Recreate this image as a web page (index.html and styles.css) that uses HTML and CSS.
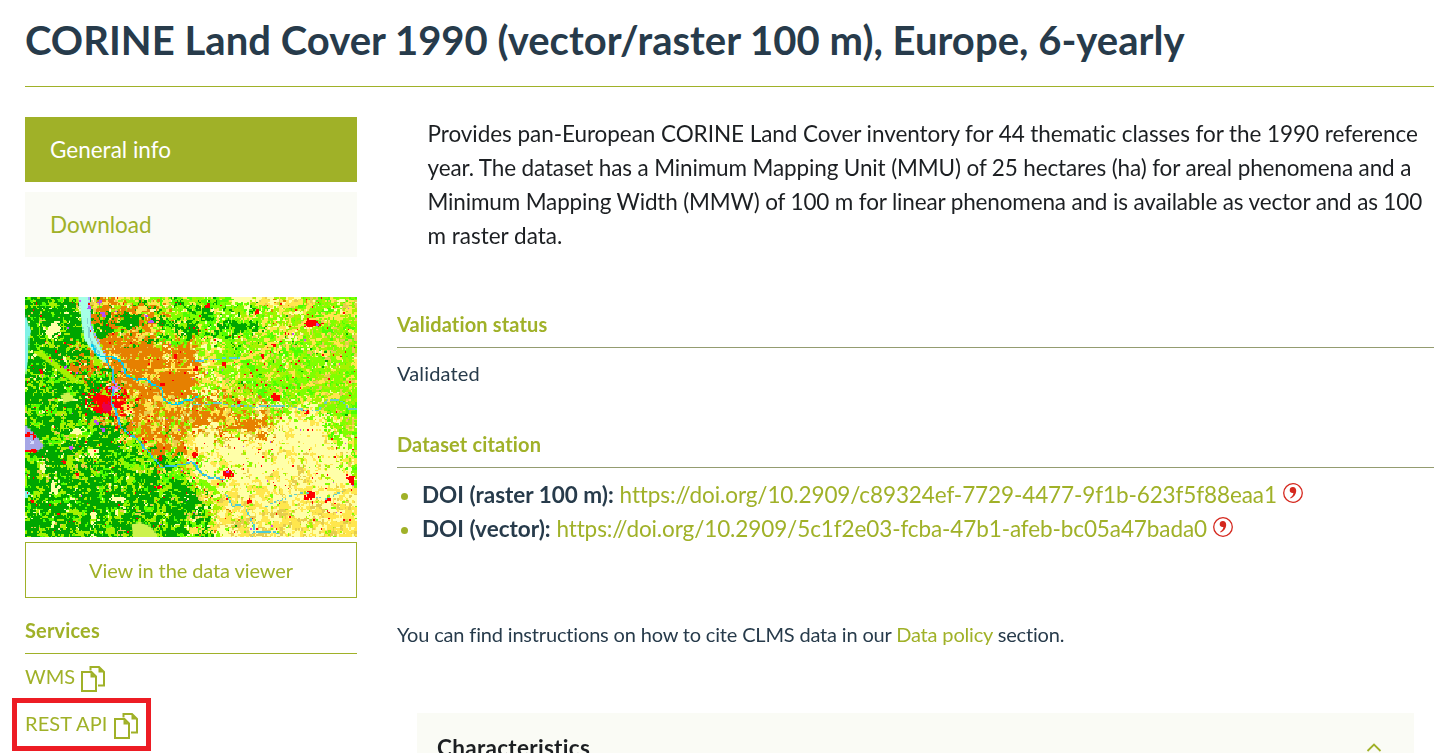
FILE: index.html
```html
<!DOCTYPE html>
<html lang="en">
<head>
<meta charset="utf-8">
<title>CORINE Land Cover 1990</title>
<link rel="stylesheet" href="styles.css">
</head>
<body>
<svg class="defs" aria-hidden="true">
  <symbol id="copy" viewBox="0 0 24 26"><path d="M9.500 4.500V1H18l5 5v13.500h-6M1 6h9.500l4.500 4.500V25H1z" fill="none" stroke="currentColor" stroke-width="2"/><path d="M9.500 6l5.500 5.500H9.500zM17.500 1L23 6.500h-5.500z" fill="currentColor"/></symbol>
  <symbol id="cite" viewBox="0 0 20 20"><circle cx="10" cy="10" r="9.300" fill="none" stroke="currentColor" stroke-width="1.300"/><path d="M9.900 4.100a3.200 3.200 0 0 0-3.200 3.100c0 2 1.700 3.200 3.700 2.700-.3 2-1.400 3.600-3.300 4.900l.5.700c3.300-1.500 5.600-4.200 5.600-7.500 0-2.500-1.300-3.900-3.300-3.900z" fill="currentColor"/></symbol>
</svg>
<header class="page-header"><h1>CORINE Land Cover 1990 (vector/raster 100 m), Europe, 6-yearly</h1></header>
<div class="layout">
  <aside class="sidebar">
    <nav class="tabs">
      <a class="tab active">General info</a>
      <a class="tab">Download</a>
    </nav>
    <canvas class="map" id="map" width="221" height="160"></canvas>
    <a class="viewer">View in the data viewer</a>
    <h2 class="heading services">Services</h2>
    <div class="service"><span class="wms">WMS</span><svg class="copy"><use href="#copy"/></svg></div>
    <div class="service marked"><span class="rest">REST API</span><svg class="copy"><use href="#copy"/></svg></div>
  </aside>
  <main class="content">
    <p class="intro"><span class="l1">Provides pan-European CORINE Land Cover inventory for 44 thematic classes for the 1990 reference</span><br><span class="l2">year. The dataset has a Minimum Mapping Unit (MMU) of 25 hectares (ha) for areal phenomena and a</span><br><span class="l3">Minimum Mapping Width (MMW) of 100 m for linear phenomena and is available as vector and as 100</span><br>m raster data.</p>
    <h2 class="heading">Validation status</h2>
    <p class="validated">Validated</p>
    <h2 class="heading">Dataset citation</h2>
    <ul class="citations">
      <li><b>DOI (raster 100 m):</b> <a>https://doi.org/10.2909/c89324ef-7729-4477-9f1b-623f5f88eaa1</a><svg class="cite"><use href="#cite"/></svg></li>
      <li><b>DOI (vector):</b> <a>https://doi.org/10.2909/5c1f2e03-fcba-47b1-afeb-bc05a47bada0</a><svg class="cite"><use href="#cite"/></svg></li>
    </ul>
    <p class="policy">You can find instructions on how to cite CLMS data in our <a>Data policy</a> section.</p>
    <section class="accordion"><h2>Characteristics</h2><svg class="chevron" viewBox="0 0 16 9"><path d="M1.500 8L8 1.500 14.500 8" fill="none" stroke="currentColor" stroke-width="1.800"/></svg></section>
  </main>
</div>
<script src="map.js"></script>
</body>
</html>
```
FILE: styles.css
```css
* { box-sizing: border-box; }
body { margin: 0; height: 753px; overflow: hidden; background: #fff; color: #273b4b; font-family: Lato, sans-serif; font-size: 20px; font-variant-ligatures: none; }
h1, h2, p, ul { margin: 0; }
a { color: #a0b128; }
.defs { position: absolute; width: 0; height: 0; }
.page-header { height: 87px; margin: 0 11px 0 25px; padding-top: 15px; border-bottom: 1px solid #a0b128; }
h1 { font-size: 40px; line-height: 50px; font-weight: 700; letter-spacing: .03px; white-space: nowrap; }
.layout { display: flex; gap: 40px; height: 666px; padding: 30px 11px 0 25px; overflow: hidden; }
.sidebar { width: 332px; flex: none; }
.tabs { display: grid; gap: 10px; }
.tab { display: flex; align-items: center; height: 65px; padding-left: 25px; background: #fafbf5; font-size: 22.5px; }
.tab.active { background: #a0b128; color: #fff; }
.map { display: block; width: 332px; height: 240px; margin-top: 40px; image-rendering: pixelated; }
.viewer { display: flex; align-items: center; justify-content: center; height: 56px; margin-top: 5px; border: 1px solid #a0b128; letter-spacing: -.1px; }
.heading { height: 37px; border-bottom: 1px solid #949c70; color: #a0b128; font-size: 20px; line-height: 27px; font-weight: 700; letter-spacing: .15px; }
.services { margin-top: 19px; border-color: #a0b128; }
.service { display: flex; align-items: center; gap: 6px; height: 47px; padding-bottom: 3px; color: #a0b128; }
.copy { width: 24px; height: 26px; position: relative; top: 3px; }
.marked { width: 139px; height: 53px; margin: -3px 0 0 -13px; padding-left: 8px; border: 5px solid #ed1c24; letter-spacing: .1px; }
.content { flex: 1; min-width: 0; }
.intro { height: 194px; padding-left: 30.5px; color: #1c1f22; font-size: 22.5px; line-height: 34px; white-space: nowrap; }
.l1 { letter-spacing: -.055px; }
.l2 { letter-spacing: -.13px; }
.l3 { letter-spacing: -.15px; }
.validated { height: 83px; padding-top: 12px; line-height: 27px; letter-spacing: .15px; }
.citations { height: 133px; padding: 10px 0 0 25px; font-size: 22.5px; line-height: 34px; white-space: nowrap; }
.citations li::marker { color: #a0b128; }
.citations a { letter-spacing: -.1px; }
.cite { width: 20px; height: 20px; margin-left: 6px; color: #d5281e; }
.policy { height: 112px; padding-top: 18px; line-height: 30px; letter-spacing: -.17px; }
.accordion { display: flex; justify-content: space-between; height: 90px; margin: 0 20px; padding: 20px 32px 0 20px; background: #fafbf5; color: #1c1f22; }
.accordion h2 { font-size: 22.5px; line-height: 30px; letter-spacing: .3px; }
.chevron { width: 16px; height: 9px; margin-top: 10px; color: #a0b128; }
```
FILE: map.js
```js
const canvas = document.getElementById('map');
const ctx = canvas.getContext('2d');
const colors = { G: '#00a600', g: '#4dff00', l: '#80ff00', L: '#a6f200', y: '#ffffa8', Y: '#ffe64d', o: '#e6cc4d', O: '#e68000', r: '#ff0000' };
// Share of each land cover class in a kind of landscape.
const kinds = {
  F: { G: 66, g: 12, L: 22, o: 6, y: 7, l: 8 },
  M: { G: 20, g: 24, l: 24, L: 16, Y: 15, y: 6 },
  V: { O: 62, Y: 20, o: 15, L: 14, l: 8, y: 9 },
  W: { O: 85, Y: 11, o: 12, L: 8 },
  C: { Y: 35, o: 15, y: 20, l: 14, L: 14, O: 14 },
  P: { y: 74, Y: 16, L: 6, l: 5, o: 6 },
  Y: { Y: 46, o: 20, y: 32, l: 6, L: 7 },
  H: { l: 38, g: 17, L: 24, Y: 20, o: 14, y: 6, G: 3 },
  A: { l: 22, g: 8, Y: 26, y: 22, L: 12, G: 2 }
};
const grid = ['FFVCMMPCHH', 'FFFVMMMAHH', 'FFVWVAHHHH', 'FFFVWAHHHH', 'FFFVVVVPAH', 'FFFMVPPPPH', 'FFFFMAPPPA', 'FFFFFCYYYY', 'FFFFFMYYYY'];
function hash(x, y, s) {
  let h = Math.imul(x + 101, 374761393) ^ Math.imul(y + 57, 668265263) ^ Math.imul(s + 7, 1442695041);
  h = Math.imul(h ^ (h >>> 13), 1274126177);
  h = Math.imul(h ^ (h >>> 15), 2246822519);
  return ((h ^ (h >>> 16)) >>> 0) / 4294967296;
}
function noise(x, y, s) {
  const a = Math.floor(x), b = Math.floor(y), u = x - a, v = y - b;
  return (hash(a, b, s) * (1 - u) + hash(a + 1, b, s) * u) * (1 - v) + (hash(a, b + 1, s) * (1 - u) + hash(a + 1, b + 1, s) * u) * v;
}
const keys = Object.keys(colors);
for (let y = 0; y < 160; y++) for (let x = 0; x < 221; x++) {
  const gx = Math.max(0, Math.min(8.99, x / 221 * 9 + (noise(x / 12, y / 12, 50) - .5) * .9));
  const gy = Math.max(0, Math.min(7.99, y / 160 * 8 + (noise(x / 12, y / 12, 51) - .5) * .9));
  const a = Math.floor(gx), b = Math.floor(gy), u = gx - a, v = gy - b;
  let best = -99, pick = 'G';
  keys.forEach((k, i) => {
    const at = (p, q) => kinds[grid[q][p]][k] || .1;
    const w = (at(a, b) * (1 - u) + at(a + 1, b) * u) * (1 - v) + (at(a, b + 1) * (1 - u) + at(a + 1, b + 1) * u) * v;
    const score = Math.log(w) + 2.8 * noise(x / 5, y / 4, i) + 4.2 * noise(x / 1.8, y / 1.7, i + 20) + 1.6 * hash(x, y, i + 40);
    if (score > best) { best = score; pick = k; }
  });
  ctx.fillStyle = colors[pick];
  ctx.fillRect(x, y, 1, 1);
}
function cell(x, y, c) { ctx.fillStyle = c; ctx.fillRect(Math.floor(x / 1.5), Math.floor(y / 1.5), 1, 1); }
function poly(points, c) {
  ctx.fillStyle = c; ctx.beginPath();
  points.forEach(p => ctx.lineTo(p[0] / 1.5, p[1] / 1.5)); ctx.fill();
}
function river(points, c, width = 1, gap = 0) {
  for (let i = 1; i < points.length; i++) {
    const [x0, y0] = points[i - 1], [x1, y1] = points[i];
    const n = Math.ceil(Math.hypot(x1 - x0, y1 - y0));
    for (let j = 0; j < n; j++) {
      const x = x0 + (x1 - x0) * j / n, base = y0 + (y1 - y0) * j / n;
      const y = base + (noise(x / 5, base / 5, 70) - .5) * 3;
      if (hash(Math.floor(x), Math.floor(y), 71) < gap) continue;
      for (let k = 0; k < width; k++) cell(x + k * 1.5, y, c);
    }
  }
}
function splat(x, y, rx, ry, c, density) {
  for (let j = -ry; j <= ry; j += 1.5) for (let i = -rx; i <= rx; i += 1.5) {
    const d = Math.hypot(i / rx, j / ry);
    if (d < 1 && noise((x + i) / 3, (y + j) / 3, 80) * .7 + hash(Math.round(x + i), Math.round(y + j), 81) * .3 < density * (1.25 - d)) cell(x + i, y + j, c);
  }
}
// Pale farmland and compact forest patches.
[[28,32,9,12],[10,57,8,5],[52,135,10,7],[70,155,9,8],[28,190,7,13],[18,168,5,9],[92,202,11,5],[67,218,4,14]].forEach(a => splat(...a, colors.y, .72));
[[105,25,18,14],[137,25,12,9],[165,32,10,17],[215,30,29,8],[182,15,9,12],[125,43,9,5]].forEach(a => splat(...a, colors.G, .68));
poly([[8,55],[17,54],[47,77],[55,87],[43,82],[25,67]], '#a6f200');
poly([[35,98],[43,95],[50,102],[39,106]], '#ccf24d');
poly([[106,227],[115,225],[125,229],[132,237],[132,240],[108,240]], '#ccf24d');
splat(155, 85, 20, 17, colors.O, .9);
// Estuary, lakes and rivers.
poly([[53,0],[64,0],[65,13],[66,25],[69,39],[76,52],[81,59],[82,67],[75,62],[65,51],[59,42],[56,22]], '#a6ffe6');
river([[64,0],[65,25],[71,40],[80,57]], '#a6a6ff', 1, .45);
river([[62,22],[65,43],[75,57]], '#80d2cf', 1, .2);
poly([[0,18],[3,26],[6,34],[4,40],[3,62],[0,79]], '#80f2e6');
poly([[0,128],[9,136],[19,149],[12,154],[0,154]], '#a6a6e6');
splat(7, 146, 8, 5, '#d6dcff', .5);
splat(1, 197, 4, 4, '#80f2e6', 1);
river([[67,48],[70,56],[80,60],[82,66],[87,71],[89,88],[86,105],[90,112],[94,124]], '#00ccf2');
river([[80,59],[90,60],[97,66],[101,79],[112,83],[119,82],[129,88],[136,90],[138,100],[146,107],[153,107],[164,102],[174,99]], '#00ccf2', 1);
// Towns lie under the narrower rivers.
river([[130,72],[180,70],[199,66],[222,60],[235,54],[250,44],[268,31],[281,23],[307,19],[326,14]], colors.Y, 3, .3);
splat(81, 104, 30, 20, '#ff0000', .58);
splat(79, 107, 18, 13, '#ff0000', .85);
splat(82, 109, 9, 7, '#e6004d', .85);
splat(90, 91, 8, 14, '#cc80ff', .42);
splat(89, 96, 6, 7, '#e6cce6', .4);
splat(5, 137, 10, 5, '#ff0000', .5); splat(7, 153, 9, 3, '#ff0000', .75);
splat(288, 26, 14, 6, '#ff0000', .85); splat(250, 100, 7, 6, '#ff0000', .8);
splat(286, 199, 6, 7, '#ff0000', .85); splat(202, 176, 9, 7, '#ff0000', .7);
splat(326, 181, 6, 7, '#ff0000', .75);
[[138,86],[182,9],[232,15],[260,36],[236,59],[199,67],[212,104],[214,105],[282,115],[249,47],[281,201],[302,202],[233,153],[169,157],[224,203],[227,221],[277,235],[39,164],[52,177],[7,203],[135,162],[135,190],[16,74],[113,101],[102,97],[119,143],[105,136],[91,130],[170,72],[150,60]].forEach(([x, y]) => splat(x, y, 3.4, 3.4, '#ff0000', .72));
for (let i = 0; i < 320; i++) cell(hash(i, 1, 90) * 331, hash(i, 2, 91) * 239, i % 8 ? '#ff0000' : '#cc4df2');
[[64,10],[75,5],[78,17],[120,18],[126,24],[40,69],[72,125],[77,133],[46,151],[202,174],[292,28]].forEach(([x, y]) => splat(x, y, 3.5, 3, '#b64df2', .7));
river([[87,71],[89,88],[86,105],[90,112],[92,120],[97,132],[112,143],[119,151],[130,163],[136,170],[145,170],[157,166],[166,165],[171,169],[178,177],[189,181],[200,182]], '#33bfe6', 1, .1);
river([[165,64],[179,63],[190,62],[208,60],[215,60]], '#4dcce0', 1, .4);
river([[165,108],[177,106],[184,108],[193,106],[207,108],[220,109],[235,110],[250,109],[265,109],[282,114],[294,112],[302,103],[315,104],[327,112],[332,112]], '#66ccc6', 1, .35);
river([[200,197],[208,208],[220,210],[225,220],[229,231],[227,240]], '#4dccd6', 1, .45);
river([[237,211],[250,204],[262,200],[272,196],[284,196],[300,201],[310,196],[318,193]], '#66ccc6', 1, .55);
river([[231,235],[243,234],[253,237]], '#4dccd6', 1, .1);
```
